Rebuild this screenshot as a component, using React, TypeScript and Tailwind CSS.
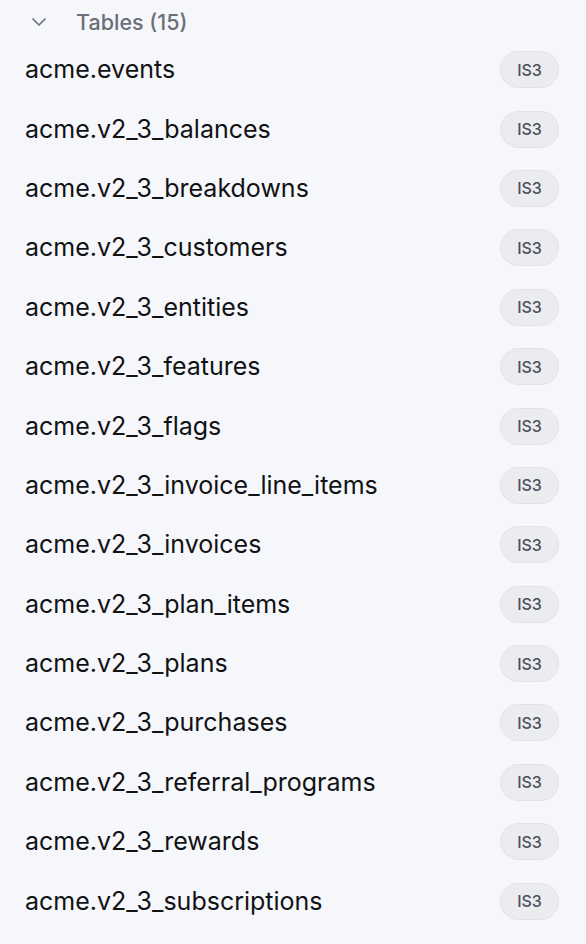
const tables = [
  "acme.events",
  "acme.v2_3_balances",
  "acme.v2_3_breakdowns",
  "acme.v2_3_customers",
  "acme.v2_3_entities",
  "acme.v2_3_features",
  "acme.v2_3_flags",
  "acme.v2_3_invoice_line_items",
  "acme.v2_3_invoices",
  "acme.v2_3_plan_items",
  "acme.v2_3_plans",
  "acme.v2_3_purchases",
  "acme.v2_3_referral_programs",
  "acme.v2_3_rewards",
  "acme.v2_3_subscriptions",
];

export default function App() {
  return (
    <div
      className="min-h-screen w-full bg-[#f6f7fb] text-[#111214]"
      style={{ fontFamily: "Inter, 'Noto Sans', sans-serif" }}
    >
      <div className="flex h-[40px] items-center pt-[4px]">
        <div className="flex w-[76px] items-center pl-[27px]">
          <svg width="24" height="24" viewBox="0 0 24 24" fill="none" stroke="#6b7280" strokeWidth="1.7" strokeLinecap="round" strokeLinejoin="round">
            <path d="M6 9l6 6 6-6" />
          </svg>
        </div>
        <span className="text-[21.5px] font-medium text-[#6b6f78]">Tables (15)</span>
      </div>
      <ul>
        {tables.map((name) => (
          <li key={name} className="flex h-[59.4px] items-center justify-between pl-[25px] pr-[27px]">
            <span className="text-[25px] leading-none">{name}</span>
            <span className="flex h-[37px] w-[59px] items-center justify-center rounded-full border border-[#e2e3e8] bg-[#ebecf0] text-[16px] font-medium text-[#4b4f58]">
              IS3
            </span>
          </li>
        ))}
      </ul>
    </div>
  );
}
